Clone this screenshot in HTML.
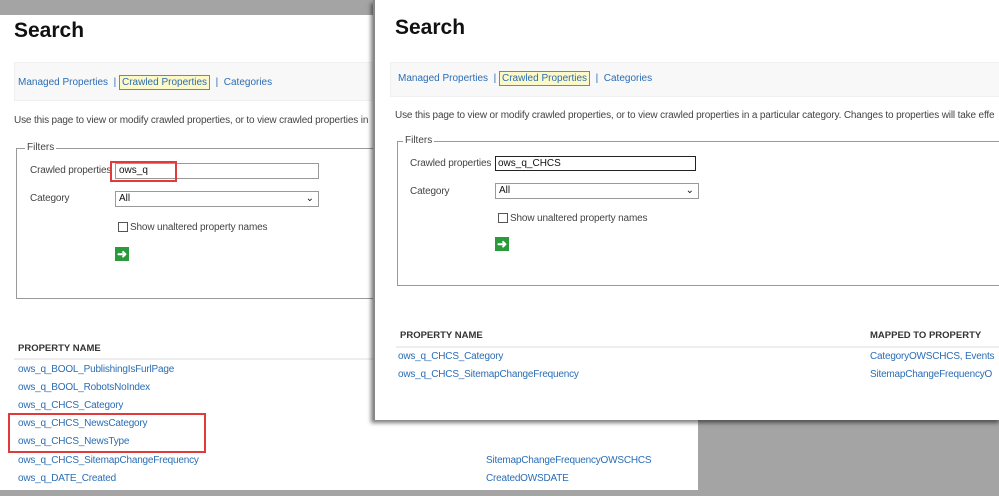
<!DOCTYPE html>
<html><head><style>
body{margin:0;width:999px;height:496px;background:#a4a4a4;position:relative;overflow:hidden;font-family:"Liberation Sans",sans-serif;}
.a{position:absolute;white-space:nowrap;}
.pg{position:absolute;background:#fff;}
h1{position:absolute;margin:0;font-size:21px;font-weight:bold;color:#111;}
.nav{position:absolute;background:#f8f8f8;border:1px solid #f0f0f0;}
.l{color:#2a6db5;font-size:10px;}
.sel{border:1px solid #6b86b8;background:#fdf8c8;padding:1px 2px;}
.t{font-size:10px;color:#444;letter-spacing:-0.15px;}
.fs{position:absolute;border:1px solid #999;}
.lg{position:absolute;background:#fff;padding:0 2px;font-size:10px;color:#444;}
.in{position:absolute;border:1px solid #999;background:#fff;font-size:10px;color:#111;}
.arr{position:absolute;width:14px;height:14px;background:#2a9a3a;color:#fff;font-size:12px;line-height:14px;text-align:center;font-weight:bold;}
.cb{position:absolute;width:8px;height:8px;border:1px solid #555;background:#fff;}
.hd{font-size:9.5px;font-weight:bold;color:#333;}
.r{position:absolute;font-size:10px;color:#2a6db5;white-space:nowrap;letter-spacing:-0.2px;}
.red{position:absolute;border:2px solid #e03a3a;}
</style></head><body>
<div class="pg" style="left:0;top:15px;width:698px;height:475px;"></div>
<h1 style="left:14px;top:19px;">Search</h1>
<div class="nav" style="left:14px;top:62px;width:370px;height:37px;"></div>
<div class="a l" style="left:18px;top:77px;">Managed Properties &nbsp;| <span class="sel">Crawled Properties</span> &nbsp;| &nbsp;Categories</div>
<div class="a t" style="left:14px;top:115px;">Use this page to view or modify crawled properties, or to view crawled properties in</div>
<div class="fs" style="left:16px;top:148px;width:370px;height:149px;"></div>
<div class="lg" style="left:25px;top:142px;">Filters</div>
<div class="a t" style="left:30px;top:165px;">Crawled properties</div>
<div class="in" style="left:115px;top:163px;width:199px;height:14px;padding-left:3px;line-height:14px;">ows_q</div>
<div class="red" style="left:110px;top:161px;width:63px;height:17px;"></div>
<div class="a t" style="left:30px;top:193px;">Category</div>
<div class="in" style="left:115px;top:191px;width:199px;height:14px;padding-left:3px;line-height:14px;">All<span style="position:absolute;right:4px;">&#8964;</span></div>
<div class="cb" style="left:118px;top:222px;"></div>
<div class="a t" style="left:130px;top:222px;">Show unaltered property names</div>
<div class="arr" style="left:115px;top:247px;">&#10140;</div>
<div class="a hd" style="left:18px;top:343px;">PROPERTY NAME</div>
<div class="a" style="left:14px;top:358px;width:360px;height:2px;background:#eee;"></div>
<div class="r" style="left:18px;top:364px;">ows_q_BOOL_PublishingIsFurlPage</div>
<div class="r" style="left:18px;top:382px;">ows_q_BOOL_RobotsNoIndex</div>
<div class="r" style="left:18px;top:400px;">ows_q_CHCS_Category</div>
<div class="r" style="left:18px;top:418px;">ows_q_CHCS_NewsCategory</div>
<div class="r" style="left:18px;top:436px;">ows_q_CHCS_NewsType</div>
<div class="r" style="left:18px;top:455px;">ows_q_CHCS_SitemapChangeFrequency</div>
<div class="r" style="left:18px;top:473px;">ows_q_DATE_Created</div>
<div class="r" style="left:486px;top:455px;">SitemapChangeFrequencyOWSCHCS</div>
<div class="r" style="left:486px;top:473px;">CreatedOWSDATE</div>
<div class="red" style="left:8px;top:413px;width:194px;height:36px;"></div>

<div class="pg" style="left:373px;top:0;width:626px;height:420px;border-left:2px solid #888;box-shadow:-2px 3px 4px rgba(0,0,0,.5);"></div>
<h1 style="left:395px;top:16px;">Search</h1>
<div class="nav" style="left:390px;top:62px;width:609px;height:33px;"></div>
<div class="a l" style="left:398px;top:73px;">Managed Properties &nbsp;| <span class="sel">Crawled Properties</span> &nbsp;| &nbsp;Categories</div>
<div class="a t" style="left:395px;top:110px;">Use this page to view or modify crawled properties, or to view crawled properties in a particular category. Changes to properties will take effe</div>
<div class="fs" style="left:397px;top:141px;width:620px;height:143px;"></div>
<div class="lg" style="left:403px;top:135px;">Filters</div>
<div class="a t" style="left:410px;top:158px;">Crawled properties</div>
<div class="in" style="left:495px;top:156px;width:197px;height:13px;border:1px solid #222;padding-left:2px;line-height:13px;">ows_q_CHCS</div>
<div class="a t" style="left:410px;top:186px;">Category</div>
<div class="in" style="left:495px;top:183px;width:199px;height:14px;padding-left:3px;line-height:14px;">All<span style="position:absolute;right:4px;">&#8964;</span></div>
<div class="cb" style="left:498px;top:213px;"></div>
<div class="a t" style="left:510px;top:213px;">Show unaltered property names</div>
<div class="arr" style="left:495px;top:237px;">&#10140;</div>
<div class="a hd" style="left:400px;top:330px;">PROPERTY NAME</div>
<div class="a hd" style="left:870px;top:330px;">MAPPED TO PROPERTY</div>
<div class="a" style="left:396px;top:346px;width:603px;height:2px;background:#eee;"></div>
<div class="r" style="left:398px;top:351px;">ows_q_CHCS_Category</div>
<div class="r" style="left:398px;top:369px;">ows_q_CHCS_SitemapChangeFrequency</div>
<div class="r" style="left:870px;top:351px;">CategoryOWSCHCS, Events</div>
<div class="r" style="left:870px;top:369px;">SitemapChangeFrequencyO</div>
</body></html>
